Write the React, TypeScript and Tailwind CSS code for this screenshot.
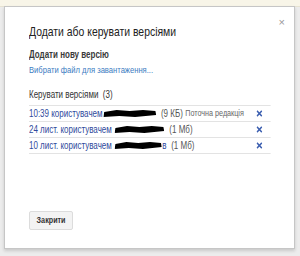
import React from 'react';

interface VersionRow {
  when: string;
  size: string;
  current?: boolean;
  tail?: string;
  blob: number;
  gap: number;
}

// widths are in the unscaled space (content is squeezed to 80% horizontally)
const rows: VersionRow[] = [
  { when: '10:39', size: '(9 КБ)', current: true, blob: 66, gap: 1 },
  { when: '24 лист.', size: '(1 Мб)', blob: 62, gap: 4 },
  { when: '10 лист.', size: '(1 Мб)', tail: 'в', blob: 59, gap: 4 },
];

// black marker scribble used to hide user names
const Redaction = ({ w, gap }: { w: number; gap: number }) => (
  <svg width={w} height="9" viewBox={`0 0 ${w} 9`} className="shrink-0" style={{ marginLeft: gap }}>
    <path
      d={`M1 3 L${w * 0.25} 1 L${w * 0.5} 2 L${w * 0.75} 1 L${w - 1} 2 L${w} 6 L${w * 0.6} 8 L${w * 0.3} 7 L0 8 Z`}
      fill="#000"
    />
  </svg>
);

const RemoveIcon = () => (
  <svg width="8" height="7" viewBox="0 0 8 7" className="ml-auto mr-[10px] shrink-0">
    <path d="M1 0.8 L7 6.2 M7 0.8 L1 6.2" stroke="#3c5fb0" strokeWidth="1.7" />
  </svg>
);

export default function App() {
  return (
    <div
      className="w-[300px] h-[256px] bg-[#ececec] overflow-hidden"
      style={{ fontFamily: '"Liberation Sans", Arial, sans-serif' }}
    >
      <div className="h-[7px] bg-[#f8f5e8] border-b border-[#e6e2d2]" />
      <div className="pl-[4px] -mt-[1px]">
        <div className="relative w-[291px] h-[243px] bg-white border border-[#c6c6c6] shadow-[0_2px_3px_rgba(0,0,0,0.15)] pl-[24px] pt-[18px]">
          <span className="absolute right-[9px] top-[10px] text-[11px] leading-none text-[#999]">×</span>

          <div className="w-[302px] origin-left scale-x-[0.8]">
            <div className="text-[13px] leading-[14px] text-[#222]">Додати або керувати версіями</div>

            <div className="mt-[10px] text-[10px] leading-[11px] font-bold text-[#3a3a3a]">Додати нову версію</div>
            <div className="mt-[4px] text-[9.5px] leading-[11px] text-[#3b7bbf]">Вибрати файл для завантаження...</div>

            <div className="mt-[14px] text-[10px] leading-[11px] text-[#333]">
              Керувати версіями&nbsp;&nbsp;(3)
            </div>

            <div className="mt-[5px] w-[302px] border-b border-[#e3e3e3]">
              {rows.map((r) => (
                <div
                  key={r.when}
                  className="flex items-center h-[16px] border-t border-[#e3e3e3] text-[10px] leading-none"
                >
                  <span className="text-[#2f4a9c] whitespace-nowrap">{r.when} користувачем</span>
                  <Redaction w={r.blob} gap={r.gap} />
                  {r.tail && <span className="text-[#2f4a9c]">{r.tail}</span>}
                  <span className="ml-[6px] text-[#555] whitespace-nowrap">{r.size}</span>
                  {r.current && (
                    <span className="ml-[3px] text-[9px] text-[#666] whitespace-nowrap">Поточна редакція</span>
                  )}
                  <RemoveIcon />
                </div>
              ))}
            </div>
          </div>

          <button className="absolute left-[24px] top-[204px] w-[44px] h-[19px] flex items-center justify-center bg-[#f3f3f3] border border-[#dcdcdc] rounded-[2px]">
            <span className="scale-x-[0.8] text-[9px] font-bold text-[#333]">Закрити</span>
          </button>
        </div>
      </div>
    </div>
  );
}
